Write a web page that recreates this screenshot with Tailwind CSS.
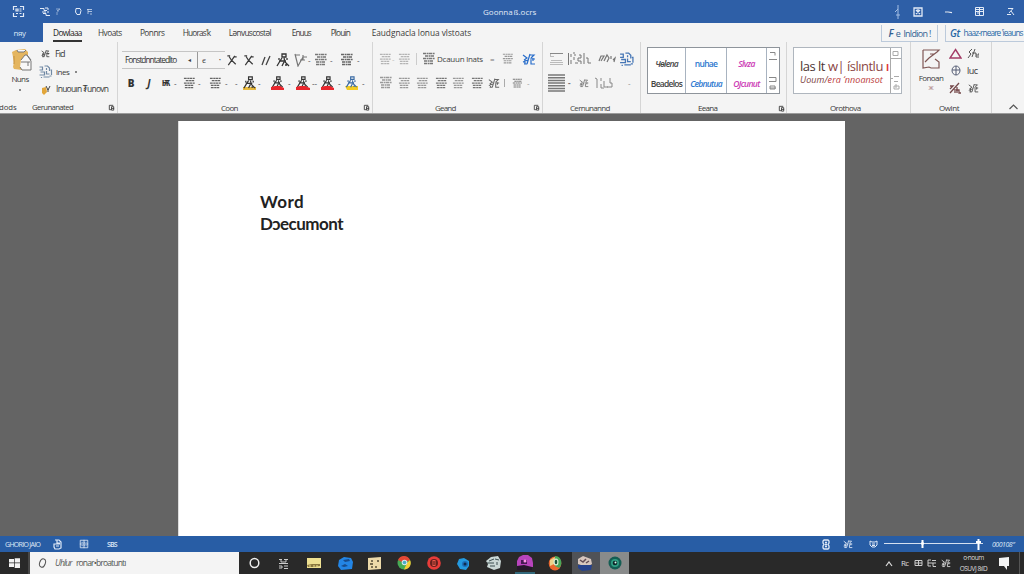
<!DOCTYPE html>
<html lang="en">
<head>
<meta charset="utf-8">
<title>Word Document</title>
<script src="https://cdn.jsdelivr.net/npm/@tailwindcss/browser@4"></script>
</head>
<body class="w-[1024px] h-[574px] overflow-hidden bg-[#646464] font-['Open_Sans','Noto_Sans',sans-serif] text-[8px] leading-none text-[#3a3a3a] whitespace-nowrap">
<svg class="hidden">
  <symbol id="lines" viewBox="0 0 14 14"><path d="M1 1.500h12M3 4h9M1 6.500h12M2 9h9M2 11.500h9" stroke="currentColor" stroke-width="1.300" stroke-dasharray="3 .6 2 .4"/></symbol>
  <symbol id="man" viewBox="0 0 14 14"><path d="M1 13l3-5 2-3M6 1h4v3H6zM8 5l1 4 4 4M3 8h7M8 9l-2 4M11 5v2M3 5v2M9 12h2" fill="none" stroke="currentColor" stroke-width="1.300"/></symbol>
  <symbol id="x" viewBox="0 0 12 14"><path d="M3 3l2 3 5 5M9 2L2 12M1 2h3M8 3h3" fill="none" stroke="currentColor" stroke-width="1.300"/></symbol>
  <symbol id="xx" viewBox="0 0 14 14"><path d="M1 1l3 12L9 4h4M1 2h5M6 7h5M9 2v5" fill="none" stroke="currentColor" stroke-width="1.200"/></symbol>
  <symbol id="launch" viewBox="0 0 8 8"><path d="M6 1.500H1.500v5h2M4 3h2.500v4H4zM4 5h3" fill="none" stroke="currentColor"/></symbol>
  <symbol id="grid" viewBox="0 0 12 12"><path d="M1.500 1.500h9v9h-9zM6 1v10M1 6h10" fill="none" stroke="currentColor"/><path d="M3 4h6M3 8h6" stroke="currentColor" stroke-dasharray="1.500 1"/></symbol>
  <symbol id="scatter" viewBox="0 0 14 14"><path d="M1 2h3v3H1M6 1h3l2 2v3M12 5h1v5M2 7h4v3H1M8 6v3h3M5 12h6M3 12v1M8 3v2M11 11h2" fill="none" stroke="currentColor" stroke-width="1.200"/></symbol>
  <symbol id="scrib" viewBox="0 0 14 14"><path d="M1 3l4 3-3 2M3 7v5M1 10l5-2M5 12L8 2M8 3h4L9 6M8 7h5M9 8v4h4M11 6v3M2 12h3" fill="none" stroke="currentColor" stroke-width="1.200"/></symbol>
</svg>
<div class="flex flex-col w-[1024px] h-[574px]">

<!-- Title bar -->
<header class="h-[23px] shrink-0 bg-[#2e5fa7] text-[#e3ebf7] flex items-center">
  <svg class="ml-[12px] size-[13px]" viewBox="0 0 13 13" fill="none" stroke="currentColor" stroke-width="1.200"><path d="M5 1.500H1.500V5M8 1.500h3.500V5M1.500 8v3.500H5M11.500 8v3.500H8"/><path d="M4 4h2v2H4zM7.500 4h2M7.500 6h2M4 8.500h2M7.500 8.500h2"/></svg>
  <svg class="ml-[14px] w-[22px] h-[12px]" viewBox="0 0 22 12" fill="none" stroke="currentColor"><path d="M1 2.500h4v2h3M3 6h4M6 2h3v2M4 7.500h3v2h4M8 6h2"/><path d="M17 3h4l-3 2h2M18 6v3" opacity=".5"/></svg>
  <svg class="ml-[13px] w-[20px] h-[12px]" viewBox="0 0 20 12" fill="none" stroke="currentColor"><path d="M2 2.500h4l1 2-1 4H3L1.500 6z"/><path d="M13 3.500h5M14 3v5M14 5.500h4M16 8h2" opacity=".7"/></svg>
  <span class="ml-[389px] w-[56px] text-[8px] font-medium tracking-[0px]">Goonna&#8202;&#223;.ocrs</span>
  <svg class="ml-[353px] w-[8px] h-[18px]" viewBox="0 0 8 18" fill="none" stroke="#a4bfe4"><path d="M6 2v14M3 9l3-3M4 12h4"/></svg>
  <svg class="ml-[13px] w-[10px] h-[10px]" viewBox="0 0 10 10" fill="none" stroke="currentColor" stroke-width="1.300"><path d="M1 1h8v8H1zM3 3l4 4M7 3L3 7M5 2v2"/></svg>
  <svg class="ml-[22px] w-[8px] h-[10px]" viewBox="0 0 8 10" stroke="currentColor" stroke-width="1.200"><path d="M0 5h3l4 .6"/></svg>
  <svg class="ml-[22px] w-[9px] h-[9px]" viewBox="0 0 9 9" fill="none" stroke="currentColor"><path d="M.5.500h8v8h-8zM1 4.500h7M4.500 1v7M1 2.500h7M3 4v3"/></svg>
  <svg class="ml-[23px] w-[8px] h-[9px]" viewBox="0 0 8 9" fill="none" stroke="currentColor"><path d="M1 1.500h5L2 6M4 4l3 4M0 7.500h4"/></svg>
</header>

<!-- Ribbon tabs -->
<nav class="h-[19px] shrink-0 bg-[#f4f4f4] flex text-[8.3px] font-medium">
  <span class="w-[43px] h-[20px] bg-[#2e5fa7] text-[#dce7f7] text-[8px] flex items-center justify-center pr-[4px] tracking-[-0.5px]">n&#1103;y</span>
  <span class="ml-[10px] w-[29px] h-[19px] border-b-2 border-[#333] flex items-start pt-[6px] justify-center text-[#222] tracking-[-0.65px]">Dowlaaa</span>
  <span class="ml-[16px] w-[42px] pt-[6px] tracking-[-0.5px]">Hvoats</span>
  <span class="w-[43px] pt-[6px] tracking-[-0.5px]">Ponnrs</span>
  <span class="w-[46px] pt-[6px] tracking-[-0.85px]">Huoras'k</span>
  <span class="w-[63px] pt-[6px] tracking-[-0.65px]">L&#601;nvuscost&#601;l</span>
  <span class="w-[39px] pt-[6px] tracking-[-0.95px]">Enuus</span>
  <span class="w-[41px] pt-[6px] tracking-[-0.85px]">Plouin</span>
  <span class="w-[510px] pt-[6px] tracking-[-0.02px]">Eaudgnacla lonua vlstoats</span>
  <span class="w-[57px] mt-[2px] h-[17px] border border-t-0 border-[#bccadb] text-[#315f91] flex items-center justify-center text-[9px] tracking-[-0.7px]"><i class="mr-[3px] text-[10px] font-semibold">F</i>e&nbsp; lnldion !</span>
  <span class="ml-[7px] w-[79px] mt-[2px] h-[17px] border-l border-b border-[#bccadb] text-[#2868a5] flex items-center pl-[4px]"><i class="text-[10px] mr-[4px] tracking-[-0.5px] font-semibold">Gt</i><span class="tracking-[-0.9px]">haaz-rneare 'ieauns</span></span>
</nav>

<!-- Ribbon -->
<section class="h-[72px] shrink-0 bg-[#f4f4f4] border-b border-[#9b9b9b] flex font-medium">
  <!-- Clipboard -->
  <div class="w-[118px] h-full border-r border-[#d5d5d5] flex flex-col overflow-hidden">
    <div class="h-[57px] flex">
      <div class="w-[40px] flex flex-col items-center">
        <svg class="mt-[7px] ml-[3px] w-[22px] h-[23px]" viewBox="0 0 22 23"><path d="M1 3l4-2 9-1 3 3v5l-6 5v8l-8-1-1-2 1-5z" fill="#e4b55f"/><path d="M6 1l1 2h6l2-2M10 11l4-5h2l4 6v9h-9l-2-3" fill="#f8f8f8" stroke="#777"/><path d="M10 13h9M16 6l4 5M17 13v4" stroke="#777"/><path d="M3 7v8" stroke="#c4903a"/></svg>
        <span class="mt-[3px] text-[8px] tracking-[-0.6px]">Nuns</span>
        <span class="mt-[6px] size-[2px] bg-[#888]"></span>
      </div>
      <div class="w-[76px] pt-[3px] flex flex-col">
        <div class="h-[17px] flex items-center"><svg class="w-[9px] h-[11px] mx-px text-[#333]"><use href="#scrib"/></svg><span class="ml-[4px] text-[9px] tracking-[-0.9px]">Fıd</span></div>
        <div class="h-[19px] flex items-center"><svg class="w-[15px] h-[14px] ml-[-2px] text-[#7189a5]"><use href="#scatter"/></svg><span class="ml-[3px] tracking-[-0.5px]">lnes</span><span class="ml-[6px] size-[2px] bg-[#888]"></span></div>
        <div class="h-[17px] flex items-center"><svg class="ml-px w-[10px] h-[10px]" viewBox="0 0 10 10"><path d="M1 3l4-1 1 5-3 3-2-2z" fill="#e2a63a"/><path d="M5 1l2 4 2-4M7 4v3" fill="none" stroke="#444"/></svg><span class="ml-[5px] text-[8.500px] tracking-[-0.73px]">Inuouın &#8366;unovn</span></div>
      </div>
    </div>
    <div class="h-[15px] pt-[4px] flex items-center text-[7.800px]"><span class="w-[32px] tracking-[-0.1px] -indent-[1px]">dods</span><span class="w-[76px] tracking-[-0.65px]">Gerunanated</span><svg class="size-[7px]"><use href="#launch"/></svg></div>
  </div>

  <!-- Font -->
  <div class="w-[255px] h-full border-r border-[#d5d5d5] flex flex-col">
    <div class="h-[29px] pt-[8px] flex items-center">
      <div class="ml-[4px] w-[103px] h-[18px] border-y border-[#c5c5c5] flex items-center"><span class="pl-[3px] w-[66px] tracking-[-0.98px] text-[8.300px] text-[#333]">Fonstdnntatedlto</span><span class="text-[6px] w-[9px]">◂</span><span class="h-full border-l border-[#999] pl-[4px] w-[22px] flex items-center">&#1108;</span><span class="text-[5px]">&bull;</span></div>
      <svg class="w-[12px] h-[13px] ml-px mr-[3px]"><use href="#x"/></svg><svg class="w-[12px] h-[13px] ml-[2px] mr-[6px]"><use href="#x"/></svg>
      <svg class="w-[10px] h-[11px] mr-[5px]" viewBox="0 0 10 11" stroke="#444" stroke-width="1.300"><path d="M1 10L4 2M5 10l4-9"/></svg>
      <svg class="w-[14px] h-[14px] text-[#333]"><use href="#man"/></svg>
      <svg class="ml-[4px] size-[14px] text-[#777]"><use href="#xx"/></svg><span class="w-[6px]">-</span>
      <svg class="size-[14px] text-[#777]"><use href="#lines"/></svg><span class="ml-[2px] w-[10px]">-</span>
      <svg class="size-[14px] text-[#666]"><use href="#lines"/></svg><span class="ml-[3px]">-</span>
    </div>
    <div class="h-[26px] flex items-center text-[#333]">
      <span class="w-[26px] text-center font-black text-[10px]">B</span><span class="w-[10px] text-center font-bold italic text-[10px]">J</span><span class="ml-[4px] w-[16px] text-center font-bold text-[8px]">&#1132;</span><span class="w-[9px]">-</span>
      <svg class="size-[13px] text-[#666]"><use href="#lines"/></svg><span class="ml-[2px] w-[11px]">-</span>
      <svg class="size-[13px] text-[#666]"><use href="#lines"/></svg><span class="ml-[3px] w-[10px]">-</span><span class="w-[6px]">-</span>
      <svg class="ml-[2px] w-[13px] h-[15px]" viewBox="0 0 13 15"><path d="M0 11h13v3H0z" fill="#e8b93c"/><use href="#man" width="13" height="13"/></svg><span class="ml-[2px] w-[13px]">-</span>
      <svg class="w-[13px] h-[15px]" viewBox="0 0 13 15"><use href="#man" width="13" height="12"/><path d="M0 11l4-1h5l4 2v2H0z" fill="#e9262c"/></svg><span class="ml-[4px] w-[8px]">-</span>
      <svg class="w-[14px] h-[15px]" viewBox="0 0 14 15"><use href="#man" width="13" height="12"/><path d="M0 11l4-1h5l5 2v2H0z" fill="#e9262c"/></svg><span class="ml-[2px] w-[9px]">--</span>
      <svg class="w-[13px] h-[15px]" viewBox="0 0 13 15"><use href="#man" width="13" height="12"/><path d="M0 11l4-1h5l4 2v2H0z" fill="#e9262c"/></svg><span class="ml-[4px] w-[7px]">-</span>
      <svg class="w-[14px] h-[15px]" viewBox="0 0 14 15"><path d="M0 10h13v4H2z" fill="#f3cc22"/><use href="#man" width="13" height="12" color="#396aa3"/></svg><span class="ml-[3px]">-</span>
    </div>
    <div class="h-[17px] pt-[6px] flex items-center text-[8px]"><span class="pl-[103px] w-[245px] tracking-[-0.7px]">Coon</span><svg class="size-[7px]"><use href="#launch"/></svg></div>
  </div>

  <!-- Paragraph -->
  <div class="w-[170px] h-full border-r border-[#d5d5d5] flex flex-col text-[#777]">
    <div class="h-[29px] pt-[6px] flex items-center">
      <svg class="ml-[6px] size-[13px] text-[#b4b4b4]"><use href="#lines"/></svg><span class="w-[6px] text-[#bbb]">-</span><svg class="size-[13px] text-[#b4b4b4]"><use href="#lines"/></svg>
      <span class="ml-[5px] h-[12px] w-px bg-[#ccc]"></span><svg class="ml-[5px] size-[14px]"><use href="#lines"/></svg><span class="w-[52px] ml-px text-[8px] text-[#444] tracking-[-0.25px]">Dcauun lnats</span><span class="ml-px w-[12px]">=</span>
      <svg class="size-[12px] text-[#999]"><use href="#lines"/></svg><svg class="ml-[8px] size-[14px] text-[#286dca]"><use href="#scrib"/></svg>
    </div>
    <div class="h-[26px] flex items-center text-[#999]">
      <svg class="ml-[6px] size-[14px]"><use href="#lines"/></svg><svg class="ml-[5px] size-[13px]"><use href="#lines"/></svg><svg class="ml-[5px] size-[13px]"><use href="#lines"/></svg><svg class="ml-[6px] size-[13px] text-[#777]"><use href="#lines"/></svg><svg class="ml-[4px] size-[13px]"><use href="#lines"/></svg><svg class="ml-[6px] size-[13px] text-[#777]"><use href="#lines"/></svg>
      <svg class="ml-[4px] size-[12px] text-[#666]"><use href="#scrib"/></svg><span class="ml-[4px] w-px h-[8px] bg-[#aaa]"></span><svg class="ml-[7px] size-[11px] text-[#777]"><use href="#lines"/></svg><span class="ml-[4px]">-</span>
    </div>
    <div class="h-[17px] pt-[6px] flex items-center text-[8px] text-[#444]"><span class="pl-[62px] w-[160px] tracking-[-0.8px]">Geand</span><svg class="size-[7px]"><use href="#launch"/></svg></div>
  </div>

  <!-- Arrange -->
  <div class="w-[98px] h-full border-r border-[#d5d5d5] flex flex-col text-[#777]">
    <div class="h-[29px] pt-[6px] flex items-center">
      <svg class="ml-[6px] w-[15px] h-[14px]" viewBox="0 0 15 14" fill="none" stroke="#bbb"><path d="M1 1.500h13M1 4.500h4M2 8.500h11M1 10.500h13M1 12.500h13M1.500 1v4" /><path d="M1 1.500h13" stroke="#888"/></svg>
      <svg class="ml-[3px] w-[25px] h-[14px]" viewBox="0 0 25 14" fill="none" stroke="#777"><path d="M1.500 1v12M4 2v3M4 8v4M7 3h2M7 5v3M8 11h3M12 3h2v3h-3v3h3v3M17 1v11M19 6h2v5h3M6 1h2"/></svg>
      <svg class="ml-[6px] w-[18px] h-[12px]" viewBox="0 0 18 12" fill="none" stroke="#777" stroke-width="1.200"><path d="M1 8l2-5h3l-3 5M6 8l3-6 2 3-2 4M13 3v3M15 7l2-2-1 4"/></svg>
      <svg class="ml-[3px] size-[15px] text-[#4676b5]"><use href="#scatter"/></svg>
    </div>
    <div class="h-[26px] flex items-center">
      <svg class="ml-[5px] w-[17px] h-[18px]" viewBox="0 0 17 18" stroke="#777" stroke-width="1.500"><path d="M0 1h17M0 3.700h17M0 6.400h17M0 9.100h17M0 11.800h17M0 14.500h17M0 17h17"/></svg><span class="ml-[3px] w-[9px] font-bold">-</span>
      <svg class="w-[10px] h-[12px] ml-[2px]"><use href="#scrib"/></svg>
      <svg class="ml-[5px] w-[19px] h-[12px]" viewBox="0 0 19 12" fill="none" stroke="#888"><path d="M1 1l2 1v9M7 1v3M7 7v4h3M10 4v6h4M16 1v5h2v4h-5"/></svg><span class="ml-[15px] text-[#888]">-</span>
    </div>
    <div class="h-[17px] pt-[6px] pl-[27px] flex items-center text-[8px] text-[#444] tracking-[-0.7px]">Cernunannd</div>
  </div>

  <!-- Styles -->
  <div class="w-[146px] h-full border-r border-[#d5d5d5] flex flex-col">
    <div class="ml-[6px] mt-[5px] w-[133px] h-[47px] border border-[#8e949b] bg-white flex text-[8.500px] font-semibold">
      <div class="w-[38px] border-r border-[#a8b3c0] flex flex-col items-center pt-[12px] gap-[11px] tracking-[-0.75px] text-[#444]"><i>&#1063;&#1257;lena</i><span>Beadelos</span></div>
      <div class="w-[41px] border-r border-[#a8b3c0] flex flex-col items-center pt-[12px] gap-[11px] tracking-[-0.75px] text-[#2d78cf]"><span>nuhae</span><i>Cebnutua</i></div>
      <div class="w-[40px] border-r border-[#a8b3c0] flex flex-col items-center pt-[12px] gap-[11px] tracking-[-0.65px] text-[#cb38b4]"><i>Slvza</i><i>OJcunut</i></div>
      <svg class="w-[12px] h-[45px]" viewBox="0 0 12 45" fill="none" stroke="#888"><path d="M3 4.500h5v3M2 11.500h8M2 29.500h7v4H2M3 38h5v3H3zM3 40h6"/></svg>
    </div>
    <div class="mt-[3px] h-[17px] pt-[6px] flex items-center text-[8px]"><span class="pl-[57px] w-[137px] tracking-[-0.7px]">Eeana</span><svg class="size-[7px]"><use href="#launch"/></svg></div>
  </div>

  <!-- WordArt -->
  <div class="w-[124px] h-full border-r border-[#d5d5d5] flex flex-col">
    <div class="ml-[6px] mt-[5px] w-[109px] h-[47px] border border-[#afb6be] bg-white flex">
      <div class="w-[96px] pl-[6px] pt-[12px] flex flex-col text-[#884b4c]">
        <span class="text-[13px] tracking-[-0.5px] text-[#4b3533]">las lt <span class="text-[#8b4645]">w| &#237;slıntlu <span class="text-[#df3538] font-semibold">ı</span></span></span>
        <span class="mt-[2px] text-[9px] italic tracking-[0.05px] text-[#7c4140]">Uoum/<span class="text-[#bb3a3a]">era &lsquo;nnoansot</span></span>
      </div>
      <svg class="w-[11px] h-[45px]" viewBox="0 0 11 45" fill="none" stroke="#aaa"><path d="M.5 0v45M3 3.500h5v4H3zM1 10.500h10M4 28.500h5M4 33.500h4M1 30.500h2M4 38h5v3H4zM6 36v4"/></svg>
    </div>
    <div class="mt-[3px] h-[17px] pt-[6px] pl-[43px] flex items-center text-[8px] tracking-[-0.6px]">Orothova</div>
  </div>

  <!-- Editing -->
  <div class="w-[81px] h-full border-r border-[#d5d5d5] flex flex-col">
    <div class="h-[55px] flex">
      <div class="w-[40px] flex flex-col items-center">
        <svg class="mt-[6px] w-[20px] h-[22px]" viewBox="0 0 20 22" fill="none" stroke="#7f5654" stroke-width="1.200"><path d="M2 2h16l-2 2M2 2v18l6-1 2 1M4 14l4-4 8-6M9 6h4M14 11l4 3v6h-8"/></svg>
        <span class="mt-[4px] tracking-[-0.6px]">Fonoan</span>
        <span class="mt-[2px] text-[7px] text-[#a77]">&#1078;</span>
      </div>
      <div class="flex flex-col">
        <div class="h-[21px] pt-[3px] flex items-center"><svg class="w-[13px] h-[11px] ml-[-2px]" viewBox="0 0 13 11"><path d="M6.500 1.500L12 10H1z" fill="none" stroke="#a33b66" stroke-width="1.400"/></svg><svg class="ml-[5px] w-[12px] h-[11px]" viewBox="0 0 12 11" fill="none" stroke="#555"><path d="M5 1L2 4l2 2-3 4M8 1L5 9M5 5h4M9 5v4h3M9 7h3V5"/></svg></div>
        <div class="h-[16px] flex items-center"><svg class="w-[10px] h-[11px]" viewBox="0 0 10 11" fill="none" stroke="#555d74"><ellipse cx="5" cy="5.500" rx="4" ry="4.500"/><path d="M5 1v9M1 5h8"/></svg><span class="ml-[6px] text-[9px] tracking-[-0.5px]">luc</span></div>
        <div class="h-[19px] flex items-center"><svg class="w-[14px] h-[12px] ml-[-3px]" viewBox="0 0 14 12" fill="none" stroke="#74484a" stroke-width="1.300"><path d="M2 4h3L2 7M2 11L11 1M7 7v4M9 5v6M8 8h3v3h2"/></svg><svg class="ml-[6px] w-[11px] h-[12px] text-[#555]"><use href="#scrib"/></svg></div>
      </div>
    </div>
    <div class="h-[17px] pt-[6px] pl-[28px] flex items-center text-[8px] tracking-[-0.4px]">Owlnt</div>
  </div>
  <div class="flex-1 flex items-end justify-end pr-[6px] pb-[3px]"><svg class="w-[9px] h-[6px]" viewBox="0 0 9 6" fill="none" stroke="#555" stroke-width="1.200"><path d="M.5 5l4-4 4 4"/></svg></div>
</section>

<!-- Document -->
<main class="h-[422px] shrink-0 bg-[#646464] flex pt-[7px] pl-[178px]">
  <article class="w-[667px] h-[415px] bg-white pl-[81px] pt-[70px] font-['Lato','Open_Sans',sans-serif] font-bold text-[#222] text-[17px] leading-[22px] border-l border-[#ddd]">
    <p class="tracking-[0.4px]">Word</p>
    <p class="tracking-[-0.5px]">D&#596;ecumont</p>
  </article>
</main>

<!-- Status bar -->
<footer class="h-[16px] shrink-0 bg-[#285da5] text-[#dfe9f7] flex items-center">
  <span class="ml-[5px] w-[48px] text-[7px] font-medium tracking-[-0.7px]">GHORIO JAIO</span>
  <svg class="w-[9px] h-[11px]" viewBox="0 0 9 11" fill="none" stroke="currentColor" stroke-width="1.200"><path d="M2 1h4l2 2v6L6 10H2L1 8V5h6M4 1v3h3M3 7h3"/></svg>
  <svg class="ml-[17px] w-[10px] h-[10px]"><use href="#grid"/></svg>
  <span class="ml-[18px] text-[7px] w-[11px] font-semibold tracking-[-0.8px]">SBS</span>
  <svg class="ml-[704px] w-[8px] h-[11px]" viewBox="0 0 8 11" fill="none" stroke="currentColor" stroke-width="1.300"><path d="M2 1h4l1 1v2L6 5.500l1 1.500v2L6 10H2L1 9V7l1-1.500L1 4V2zM3 3.500h2M3 5.500h2M3 7.500h2"/></svg>
  <svg class="ml-[13px] w-[10px] h-[12px]"><use href="#scrib"/></svg>
  <svg class="ml-[16px] w-[9px] h-[8px]" viewBox="0 0 9 8" fill="none" stroke="currentColor"><path d="M1 1l2 1h3l2-1v4L6 7H3L1 5zM3 4h3M3 5.500h3"/></svg>
  <svg class="ml-[6px] w-[100px] h-[14px]" viewBox="0 0 100 14" fill="none" stroke="#d5e0f0"><path d="M0 6.500h99"/><path d="M38.500 3v8M94.500 2v11" stroke="#fff" stroke-width="2"/><path d="M37 6.500h3M92 5h5" stroke="#fff" stroke-width="2"/></svg>
  <span class="ml-[8px] text-[7px] italic font-medium tracking-[-0.5px]">000108&Prime;</span>
</footer>

<!-- Task bar -->
<footer class="h-[22px] shrink-0 bg-[#292929] text-[#ddd] flex items-center">
  <div class="w-[30px] h-full border-r-2 border-[#484848] flex items-center pl-[9px]"><svg class="w-[11px] h-[10px]" viewBox="0 0 11 10" fill="#f2f2f2"><path d="M0 1h5v3.600H0zM5.700.300H11v4.300H5.700zM0 5.200h5v3.900H0zM5.700 5.200H11V10H5.700z"/></svg></div>
  <div class="w-[209px] h-full bg-[#f4f4f4] flex items-center text-[#555]">
    <svg class="ml-[8px] w-[9px] h-[11px]" viewBox="0 0 9 11" fill="none" stroke="#555"><ellipse cx="4.500" cy="5" rx="2.800" ry="4.300" transform="rotate(20 4.500 5)"/></svg>
    <span class="ml-[8px] mt-px text-[8.500px] font-medium tracking-[-0.85px]"><i>Uhlur</i>&nbsp;&nbsp; ronar&bull;broatuntı</span>
  </div>
  <svg class="ml-[10px] w-[11px] h-[12px]" viewBox="0 0 11 12" fill="none" stroke="#eee" stroke-width="1.500"><ellipse cx="5.500" cy="6" rx="4.300" ry="4.500"/></svg>
  <svg class="ml-[18px] w-[11px] h-[11px]" viewBox="0 0 11 11" fill="none" stroke="#ccc"><path d="M1 1.500h3M6 1.500h4M3 1v3h5V2M1 5.500h9M1 8h3v2H1M6 8h4M6 10.500h4"/></svg>
  <svg class="ml-[18px] w-[14px] h-[12px]" viewBox="0 0 14 12"><path d="M0 1h14v10H0z" fill="#eee092"/><path d="M0 8l5-1h8v2l-6 1H1" fill="#8b783e"/><path d="M3 8v2M7 8v2M10 8v2" stroke="#eee092"/></svg>
  <svg class="ml-[17px] w-[15px] h-[14px]" viewBox="0 0 15 14"><path d="M1 4l5-3 7 1 2 4-1 7-11 1-3-4z" fill="#2385e5"/><path d="M5 4l6-1 1 2-5 1M3 10l4-2 3 2-4 1" fill="#174c8d"/></svg>
  <svg class="ml-[15px] w-[13px] h-[13px]" viewBox="0 0 13 13"><path d="M0 1l13-1v12l-13 1z" fill="#ecd9a9"/><path d="M4 3v2M9 4h2M2 7h3M8 9v2M4 9v2" stroke="#4c4431" stroke-width="1.400"/></svg>
  <svg class="ml-[16px] w-[14px] h-[14px]" viewBox="0 0 14 14"><circle cx="7" cy="7" r="6.500" fill="#46aa54"/><path d="M1 4a6.500 6.500 0 0 1 12 0L7 7z" fill="#e54735"/><path d="M13 4a6.500 6.500 0 0 1-6 9.500L10 7z" fill="#f4cc34"/><circle cx="7.500" cy="6.500" r="2.800" fill="#d9e8eb"/><circle cx="7.500" cy="6.500" r="1.800" fill="#49acc7"/></svg>
  <svg class="ml-[16px] w-[14px] h-[14px]" viewBox="0 0 14 14"><circle cx="7" cy="7" r="6.800" fill="#e83c39"/><circle cx="7" cy="7" r="4" fill="#66201e"/><path d="M5.500 4h3v6h-3z" fill="#e95949"/><path d="M7 5v4" stroke="#421513"/></svg>
  <svg class="ml-[16px] w-[13px] h-[13px]" viewBox="0 0 13 13"><path d="M2 2l5-1 5 3v5l-3 4-6-1-3-5z" fill="#249ae0"/><circle cx="8" cy="7" r="3" fill="#1c6fb9"/><circle cx="8" cy="7" r="1.500" fill="#102c4d"/></svg>
  <svg class="ml-[16px] w-[15px] h-[14px]" viewBox="0 0 15 14"><path d="M0 5l5-4 7-1 3 5-1 7-6 2-7-3 1-3z" fill="#cad7d5"/><path d="M3 5l5-2M1 7h7M4 10h5M9 3l4 1M11 6v3" stroke="#3c4e50"/></svg>
  <svg class="ml-[14px] w-[20px] h-[22px]" viewBox="0 0 20 22"><path d="M0 20h20v2H0z" fill="#32697b"/><path d="M2 9l2-4 4-2h5l4 3 1 5v4H2z" fill="#b944bd"/><path d="M6 8h6v4H6z" fill="#481955"/><path d="M2 14l7-1 8 2v3H2z" fill="#27172d"/><circle cx="10" cy="9" r="1.500" fill="#ff94eb"/></svg>
  <svg class="ml-[13px] w-[14px] h-[15px]" viewBox="0 0 14 15"><ellipse cx="7" cy="7.500" rx="6.300" ry="7" fill="#e9682f"/><path d="M7 0c7 0 8 9 4 12L7 10z" fill="#48a85a"/><path d="M2 4l5-3-1 7-4 2z" fill="#ead38a"/><ellipse cx="8" cy="6" rx="2.500" ry="3.500" fill="#d8edd4"/><ellipse cx="8" cy="6" rx="1.300" ry="2.300" fill="#19543a"/></svg>
  <div class="ml-[10px] w-[28px] h-full bg-[#505256] flex items-center justify-center"><svg class="w-[17px] h-[16px] ml-[-4px]" viewBox="0 0 17 16"><path d="M2 4l5-3 8 3 1 5-5 3-9-3z" fill="#d7c6bd"/><path d="M2 10h14l-1 5-9 1-4-3z" fill="#26428c"/><path d="M4 5l3 2 3-3M10 8l3-2" fill="none" stroke="#614b55" stroke-width="1.500"/></svg></div>
  <div class="w-[29px] h-full bg-[#898b8b] flex items-center justify-center"><svg class="size-[14px]" viewBox="0 0 14 14"><circle cx="7" cy="7" r="6.500" fill="#145d53"/><circle cx="7" cy="7" r="4" fill="#2f9d83"/><circle cx="7" cy="7" r="2.300" fill="#0b2527"/><circle cx="7.500" cy="6.500" r="1" fill="#d7fff0"/></svg></div>
  <svg class="ml-[256px] w-[8px] h-[7px]" viewBox="0 0 8 7" fill="none" stroke="#ddd" stroke-width="1.200"><path d="M1 6l3-4 3 4"/></svg>
  <span class="ml-[8px] w-[14px] text-[8px] font-medium tracking-[-0.7px]">Rc</span>
  <svg class="w-[9px] h-[8px] -ml-px" viewBox="0 0 9 8" fill="none" stroke="#ccc"><path d="M1 1.500h7v5H1zM4.500 1v6M1 4h7"/></svg>
  <svg class="ml-[4px] w-[9px] h-[9px]" viewBox="0 0 9 9" fill="none" stroke="#ccc"><path d="M4 1H1v6h3M5 1.500h4M1 4h8M6 4v3.500h3"/></svg>
  <svg class="ml-[4px] w-[12px] h-[10px] text-[#ddd]"><use href="#scrib"/></svg>
  <div class="ml-[6px] w-[31px] h-full flex flex-col items-center pt-[3px] gap-[4px] text-[6.500px] font-medium tracking-[-0.5px]"><span>o&middot;noum</span><span>OSUVJ 8ıID</span></div>
  <svg class="ml-[10px] w-[11px] h-[13px]" viewBox="0 0 11 13"><path d="M0 1l10-1v9H8v4L5 9H0z" fill="#f4f4f4"/></svg>
  <span class="ml-[9px] w-px h-full bg-[#555]"></span>
</footer>
</div>
</body>
</html>
